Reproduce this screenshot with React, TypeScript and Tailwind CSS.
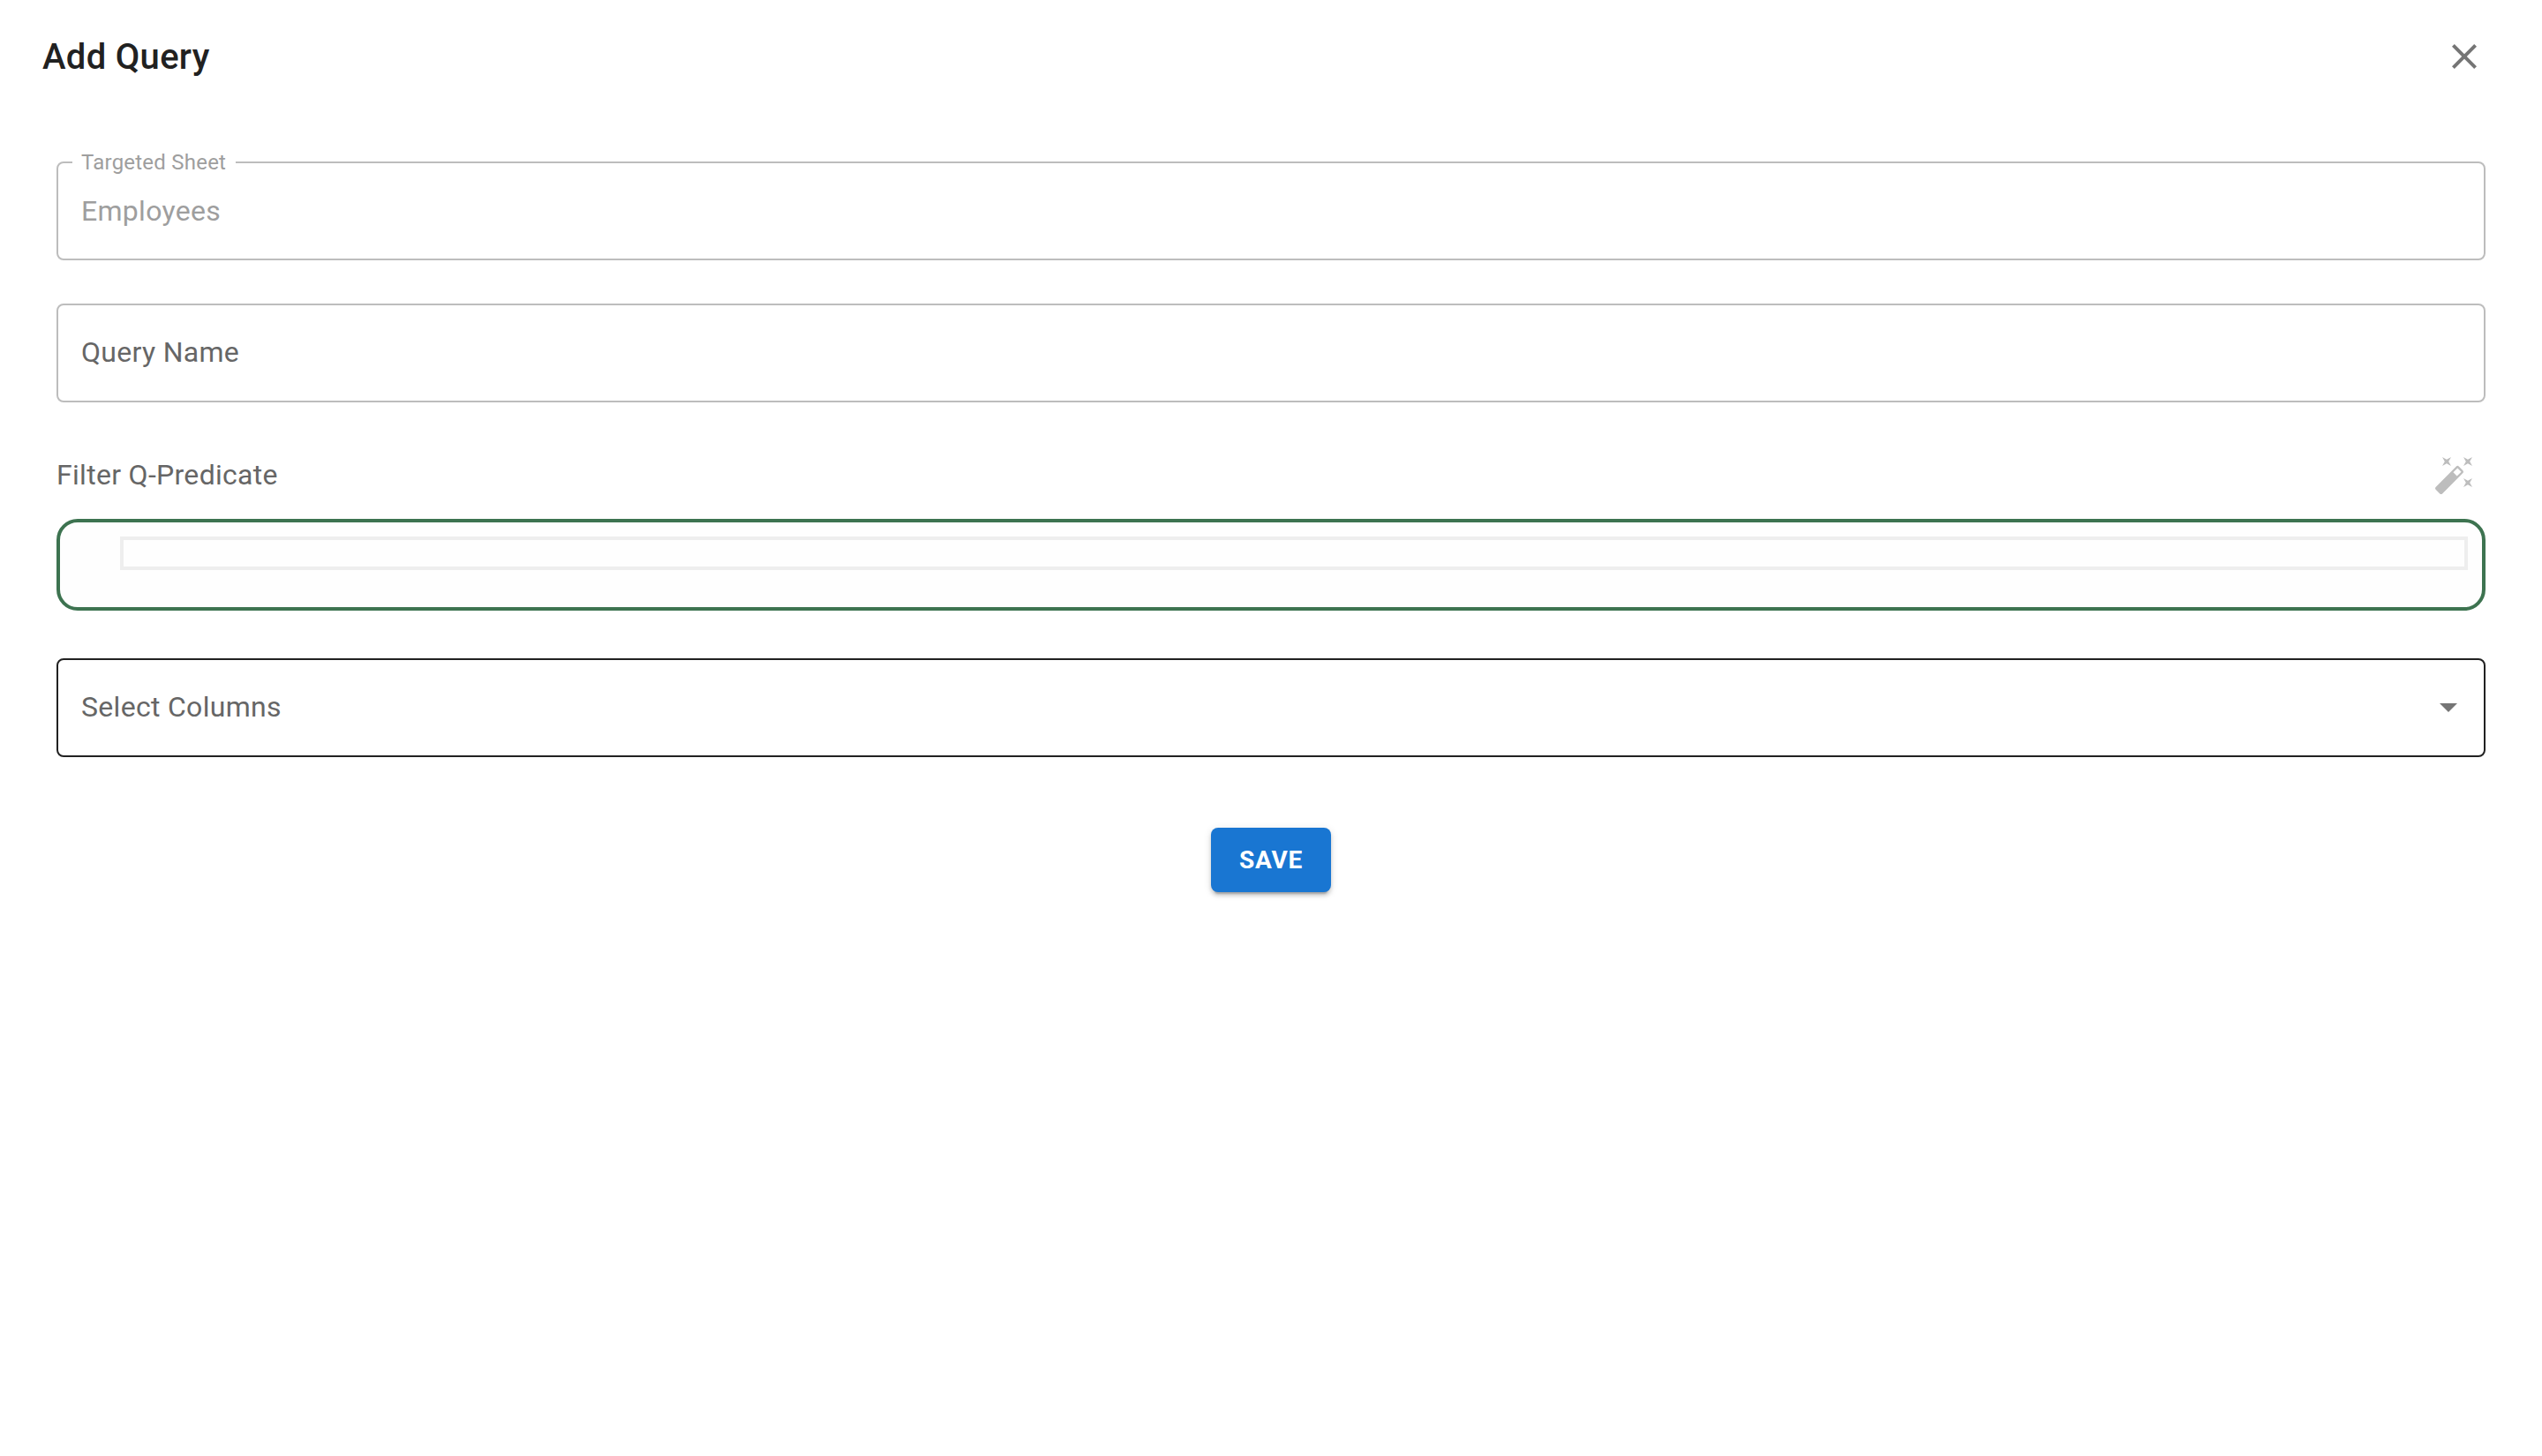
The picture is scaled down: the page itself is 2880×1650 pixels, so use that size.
const roboto = "font-['Roboto',sans-serif]"

function CloseIcon() {
  return (
    <svg width="48" height="48" viewBox="0 0 24 24" fill="#757575">
      <path d="M19 6.41 17.59 5 12 10.59 6.41 5 5 6.41 10.59 12 5 17.59 6.41 19 12 13.41 17.59 19 19 17.59 13.41 12z" />
    </svg>
  )
}

function WandIcon() {
  return (
    <svg width="48" height="48" viewBox="0 0 24 24" fill="#bdbdbd">
      <path d="M7.5 5.6 10 7 8.6 4.5 10 2 7.5 3.4 5 2l1.4 2.5L5 7zm12 9.8L17 14l1.4 2.5L17 19l2.5-1.4L22 19l-1.4-2.5L22 14zM22 2l-2.5 1.4L17 2l1.4 2.5L17 7l2.5-1.4L22 7l-1.4-2.5zm-7.63 5.29a.9959.9959 0 0 0-1.41 0L1.29 18.96c-.39.39-.39 1.02 0 1.41l2.34 2.34c.39.39 1.02.39 1.41 0L16.7 11.05c.39-.39.39-1.02 0-1.41l-2.33-2.35zm-1.03 5.49-2.12-2.12 2.44-2.44 2.12 2.12-2.44 2.44z" />
    </svg>
  )
}

function ArrowIcon() {
  return (
    <svg width="48" height="48" viewBox="0 0 24 24" fill="#757575">
      <path d="M7 10l5 5 5-5z" />
    </svg>
  )
}

export default function App() {
  return (
    <div className={`${roboto} w-full h-[1650px] bg-white`}>
      <div className="flex items-center justify-between pl-[48px] pr-[64px] pt-[32px]">
        <h2 className="text-[40px] leading-[64px] font-medium tracking-[0.3px] text-[#212121] mt-[1px] mb-[-1px]">Add Query</h2>
        <button className="flex items-center justify-center w-[48px] h-[48px]">
          <CloseIcon />
        </button>
      </div>

      <div className="flex flex-col px-[64px] pt-[87px]">
        <div className="relative h-[112px] flex items-center border-2 border-[#bdbdbd] rounded-[8px] px-[26px]">
          <span className="absolute left-[16px] top-[-17px] bg-white pl-[10px] pr-[11px] text-[24px] leading-[32px] text-[#9e9e9e] tracking-[0.225px]">
            Targeted Sheet
          </span>
          <span className="text-[32px] leading-[48px] tracking-[0.3px] text-[#9e9e9e]">Employees</span>
        </div>

        <div className="mt-[49px] h-[112px] flex items-center border-2 border-[#bdbdbd] rounded-[8px] px-[26px] pb-[3px]">
          <span className="text-[32px] leading-[48px] tracking-[0.3px] text-[#666666]">Query Name</span>
        </div>

        <div className="mt-[58px] h-[48px] flex items-center justify-between pr-[11px]">
          <span className="text-[32px] leading-[48px] tracking-[0.3px] text-[#666666]">Filter Q-Predicate</span>
          <WandIcon />
        </div>

        <div className="mt-[26px] h-[104px] border-4 border-[#3d7350] rounded-[24px] bg-[#fefefe] pl-[68px] pr-[16px] pt-[16px]">
          <div className="h-[38px] border-4 border-[#eeeeee]" />
        </div>

        <div className="mt-[54px] h-[112px] flex items-center justify-between border-2 border-[#212121] rounded-[8px] pl-[26px] pr-[16px] pb-[2px]">
          <span className="text-[32px] leading-[48px] tracking-[0.3px] text-[#666666]">Select Columns</span>
          <ArrowIcon />
        </div>

        <div className="mt-[80px] flex justify-center">
          <button className="w-[136px] h-[73px] rounded-[8px] bg-[#1976d2] text-white text-[28px] font-bold tracking-[0.8px] shadow-[0_6px_2px_-4px_rgba(0,0,0,0.2),0_4px_4px_0_rgba(0,0,0,0.14),0_2px_10px_0_rgba(0,0,0,0.12)]">
            SAVE
          </button>
        </div>
      </div>
    </div>
  )
}
